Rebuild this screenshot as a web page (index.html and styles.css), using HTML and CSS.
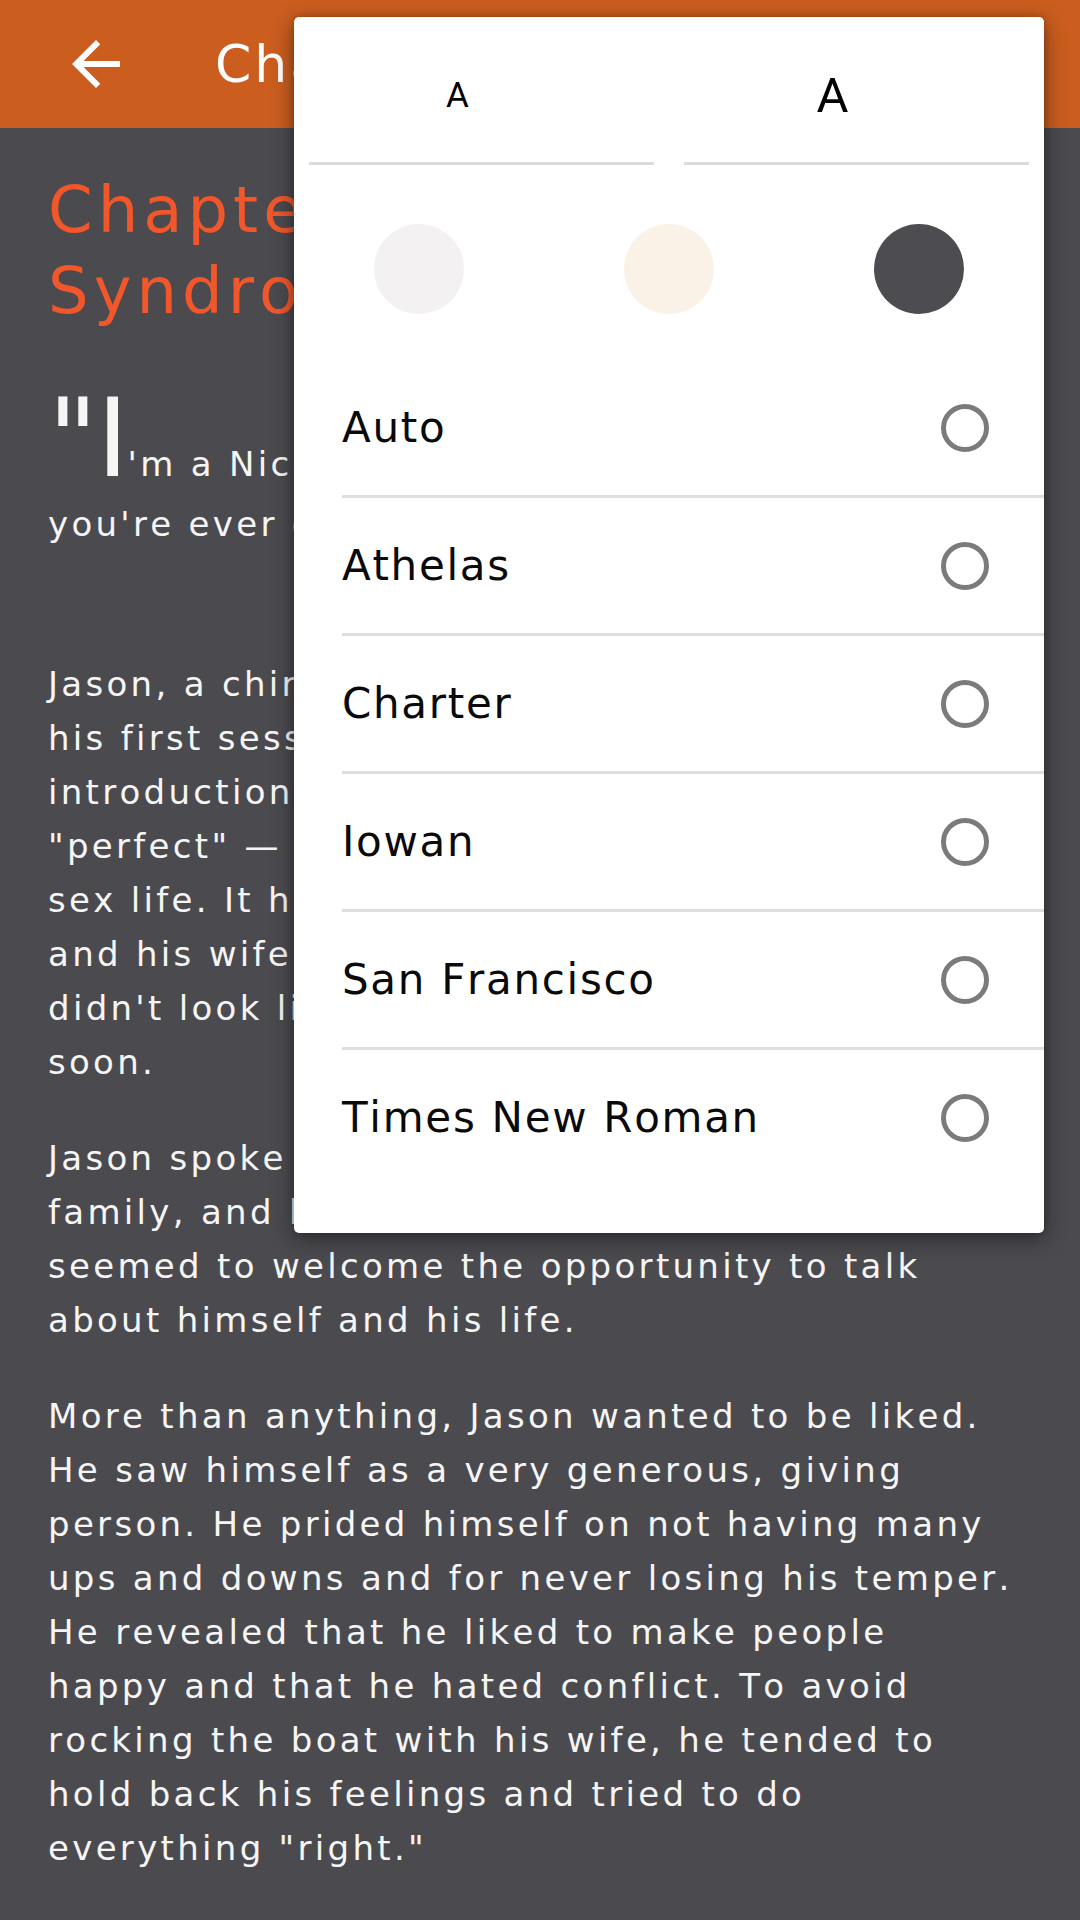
FILE: index.html
```html
<!DOCTYPE html>
<html lang="en">
<head>
<meta charset="utf-8">
<title>Reader</title>
<link rel="stylesheet" href="styles.css">
</head>
<body>
<header class="appbar">
  <svg class="appbar-back" viewBox="0 0 24 24" width="72" height="72" aria-hidden="true">
    <path d="M20 11H7.83l5.59-5.59L12 4l-8 8 8 8 1.41-1.41L7.83 13H20v-2z" fill="#ffffff"/>
  </svg>
  <h1 class="appbar-title">Chapter 1: The Nice Guy Syndrome</h1>
</header>

<main class="reader">
  <h2 class="chapter-title">Chapter 1: The Nice Guy Syndrome</h2>
  <p class="para lead"><span class="dropcap">"I</span>'m a Nice Guy. I'm probably the nicest guy you're ever going to meet."</p>
  <p class="para">Jason, a chiropractor in his mid-forties, started his first session by giving me a brief introduction, explaining that his life was "perfect" — except for his marriage and their sex life. It had been several months since he and his wife had last made love, and things didn't look like they would change any time soon.</p>
  <p class="para">Jason spoke very openly about his career, his family, and his upbringing. He genuinely seemed to welcome the opportunity to talk about himself and his life.</p>
  <p class="para">More than anything, Jason wanted to be liked. He saw himself as a very generous, giving person. He prided himself on not having many ups and downs and for never losing his temper. He revealed that he liked to make people happy and that he hated conflict. To avoid rocking the boat with his wife, he tended to hold back his feelings and tried to do everything "right."</p>
</main>

<div class="settings-menu">
  <div class="size-row">
    <div class="size-btn size-small">A</div>
    <div class="size-btn size-large">A</div>
  </div>
  <div class="theme-row">
    <div class="theme-cell"><span class="swatch swatch-light"></span></div>
    <div class="theme-cell"><span class="swatch swatch-sepia"></span></div>
    <div class="theme-cell"><span class="swatch swatch-dark"></span></div>
  </div>
  <ul class="font-list">
    <li class="font-item"><span class="font-name">Auto</span><span class="radio"></span></li>
    <li class="font-item"><span class="font-name">Athelas</span><span class="radio"></span></li>
    <li class="font-item"><span class="font-name">Charter</span><span class="radio"></span></li>
    <li class="font-item"><span class="font-name">Iowan</span><span class="radio"></span></li>
    <li class="font-item"><span class="font-name">San Francisco</span><span class="radio"></span></li>
    <li class="font-item"><span class="font-name">Times New Roman</span><span class="radio"></span></li>
  </ul>
</div>
</body>
</html>
```

FILE: styles.css
```css
* { box-sizing: border-box; }

html, body {
  margin: 0;
  padding: 0;
}

body {
  position: relative;
  width: 1080px;
  height: 1920px;
  overflow: hidden;
  background: #4b4a4f;
  font-family: "DejaVu Sans", sans-serif;
  font-kerning: none;
  color: #f5f5f5;
}

/* App bar */
.appbar {
  height: 128px;
  background: #cb5e1f;
  display: flex;
  align-items: center;
  padding: 0 48px 0 60px;
}

.appbar-back {
  flex: none;
  display: block;
}

.appbar-title {
  margin: 0 0 0 83px;
  min-width: 0;
  font-size: 52px;
  font-weight: normal;
  letter-spacing: 3px;
  color: #ffffff;
  white-space: nowrap;
  overflow: hidden;
  text-overflow: clip;
}

/* Reading area */
.reader {
  padding: 42px 62px 0 48px;
}

.chapter-title {
  margin: 0 0 49px;
  font-size: 64px;
  line-height: 81px;
  font-weight: normal;
  letter-spacing: 5px;
  color: #f2572b;
}

.para {
  margin: 0 0 42px;
  font-size: 34px;
  line-height: 54px;
  letter-spacing: 3.3px;
}

.para.lead {
  margin-bottom: 106px;
}

.dropcap {
  font-size: 108px;
  line-height: 116px;
  letter-spacing: -1px;
}

/* Settings popup */
.settings-menu {
  position: absolute;
  top: 17px;
  left: 294px;
  width: 750px;
  padding-bottom: 48px;
  background: #ffffff;
  border-radius: 5px;
  box-shadow: 0 6px 22px rgba(0, 0, 0, 0.45), 0 0 6px rgba(0, 0, 0, 0.2);
  color: #000000;
}

.size-row {
  display: flex;
  gap: 30px;
  padding: 0 15px;
}

.size-btn {
  flex: 1;
  height: 148px;
  padding: 11px 48px 0 0;
  border-bottom: 3px solid #dcdcdf;
  display: flex;
  align-items: center;
  justify-content: center;
  font-family: Roboto, "Noto Sans", sans-serif;
}

.size-small { font-size: 35px; }
.size-large { font-size: 49px; }

.theme-row {
  display: flex;
  padding: 59px 0 46px;
}

.theme-cell {
  flex: 1;
  display: flex;
  justify-content: center;
}

.swatch {
  width: 90px;
  height: 90px;
  border-radius: 50%;
}

.swatch-light { background: #f3f1f1; }
.swatch-sepia { background: #fbf2e7; }
.swatch-dark { background: #4d4c50; }

.font-list {
  list-style: none;
  margin: 0;
  padding: 0 0 0 48px;
}

.font-item {
  height: 138px;
  padding: 0 55px 0 0;
  border-bottom: 3px solid #dedede;
  display: flex;
  align-items: center;
  justify-content: space-between;
}

.font-item:last-child {
  height: 135px;
  border-bottom: none;
}

.font-name {
  font-size: 42px;
  letter-spacing: 1.7px;
  color: #0a0a0a;
}

.radio {
  width: 48px;
  height: 48px;
  border: 5px solid #7b7b7b;
  border-radius: 50%;
}
```
